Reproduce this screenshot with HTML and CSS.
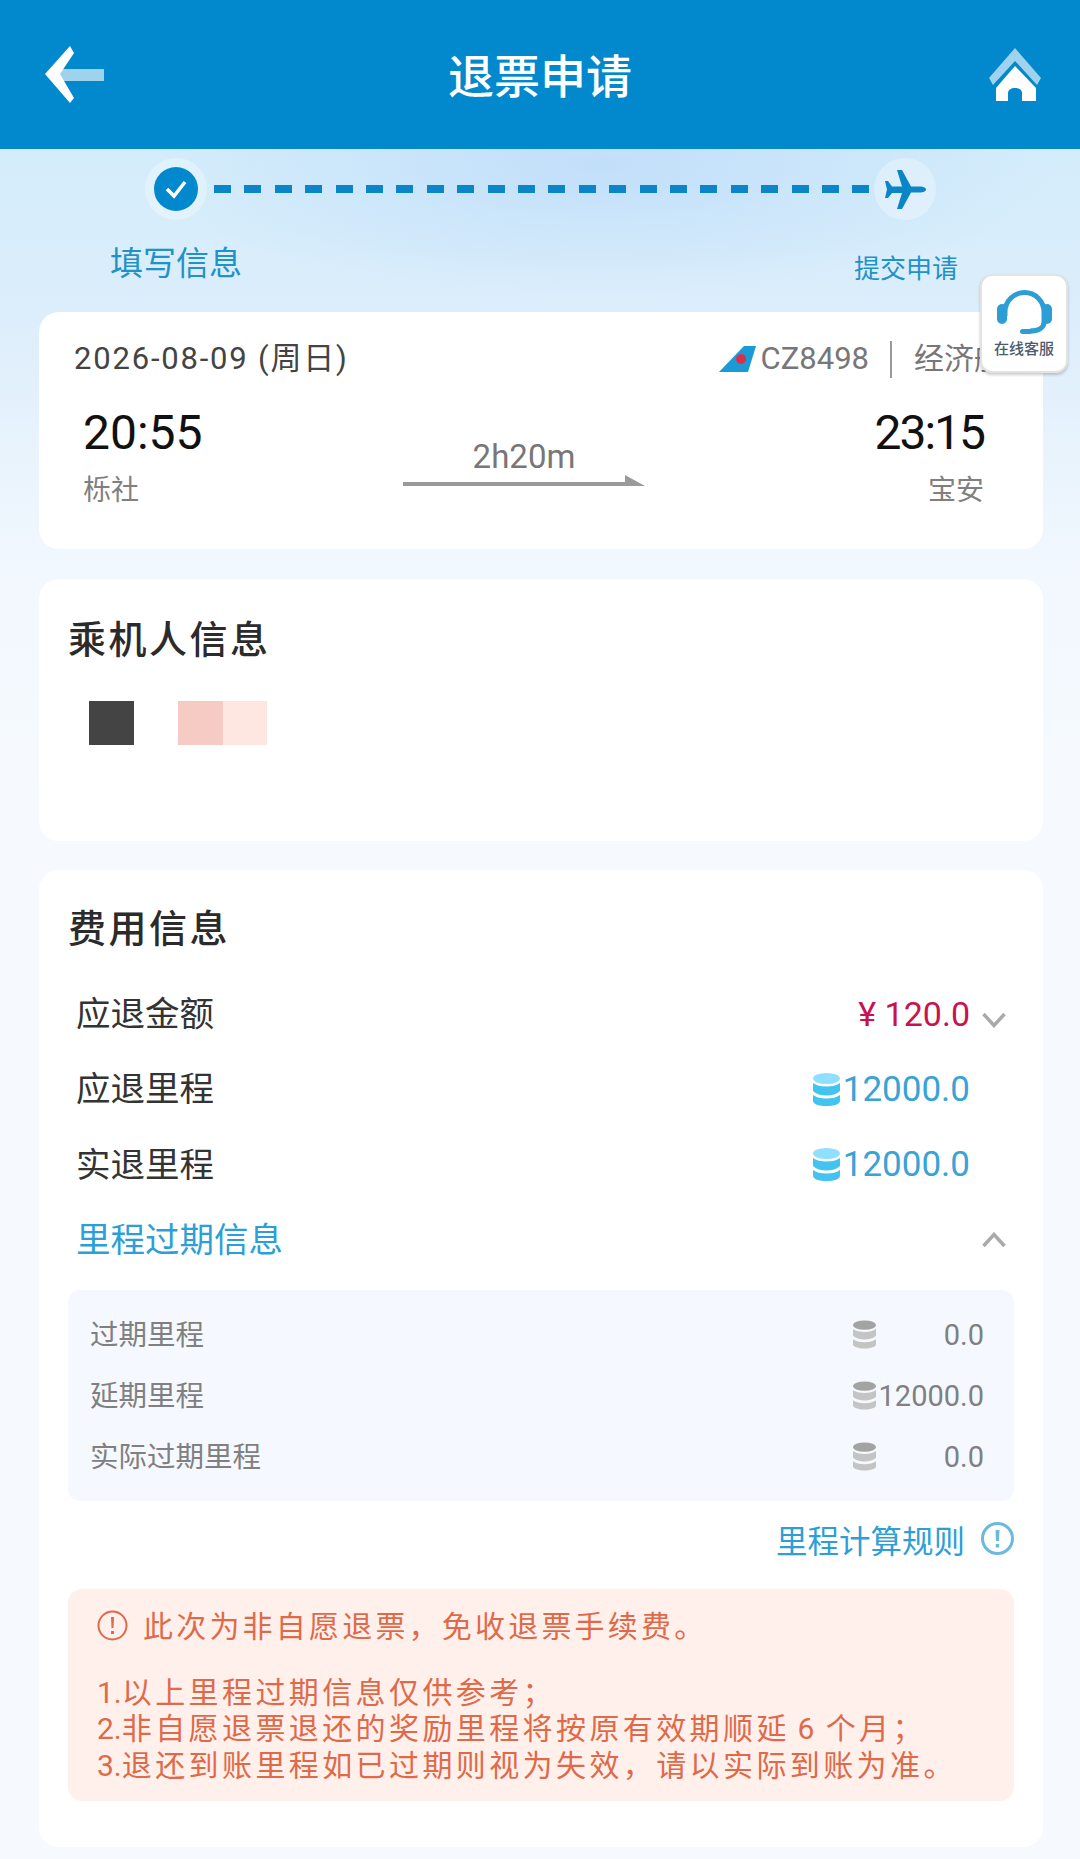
FILE: index.html
```html
<!DOCTYPE html>
<html lang="zh-CN">
	<head>
		<meta charset="utf-8">
		<title>退票申请</title>
		<link rel="stylesheet" href="styles.css">
	</head>
	<body>
		<svg class="defs" width="0" height="0">
			<symbol id="coin" viewBox="0 0 27 33">
				<path fill="var(--coin-low)" d="M0 22c3 2.500 8 3.500 13.500 3.500S24 24.500 27 22v6c0 3-6 5-13.500 5S0 31 0 28z"/>
				<path fill="var(--coin-low)" d="M0 10c3 2.500 8 3.500 13.500 3.500S24 12.500 27 10v8c-3 3-8 4.500-13.500 4.500S3 21 0 18z"/>
				<ellipse fill="var(--coin-top)" cx="13.500" cy="5.500" rx="13.500" ry="5.500"/>
			</symbol>
		</svg>

		<header class="topbar">
			<svg class="back-icon" width="60" height="60" viewBox="0 0 60 60">
				<rect x="16" y="23" width="44" height="12" fill="#9fd2ec"/>
				<path fill="#fff" d="M1 28 26 0l4 7-14 21 14 24-4 5z"/>
			</svg>
			<h1 class="topbar-title">退票申请</h1>
			<svg class="home-icon" width="54" height="54" viewBox="0 0 54 54">
				<path fill="#9fd2ec" d="M27 0 53 30l-4 7L27 13 5 37l-4-7z"/>
				<path fill="#fff" d="M27 18 48 40v13H8V40z"/>
				<path fill="#0288cc" d="M20 54V45c0-3 3-5 7-5s7 2 7 5v9z"/>
			</svg>
		</header>

		<section class="steps">
			<div class="track">
				<span class="halo">
					<svg width="44" height="44" viewBox="0 0 44 44">
						<circle cx="22" cy="22" r="22" fill="#0288cc"/>
						<path d="M13 22l7 7 11-14" fill="none" stroke="#fff" stroke-width="3.500"/>
					</svg>
				</span>
				<span class="track-line"></span>
				<span class="halo">
					<svg width="41" height="41" viewBox="0 0 41 41">
						<path fill="#0a85c8" d="M41 20.500c0-2-3-3-6-3h-9L17 1h-5l5 16.500H7L3 12H0l2 8.500L0 29h3l4-5h10l-5 16h5l9-16.500h9c3 0 6-1 6-3z"/>
					</svg>
				</span>
			</div>
			<div class="step-labels">
				<span class="step-now">填写信息</span>
				<span class="step-next">提交申请</span>
			</div>
		</section>

		<aside class="service">
			<svg width="55" height="47" viewBox="0 0 55 47">
				<path d="M8 27V23a19.500 19.500 0 0 1 39 0v10c0 6-6 9-14 9" fill="none" stroke="#2c9ed4" stroke-width="5"/>
				<rect x="0" y="15" width="10" height="20" rx="5" fill="#2c9ed4"/>
				<rect x="45" y="15" width="10" height="20" rx="5" fill="#2c9ed4"/>
				<rect x="23" y="40" width="12" height="5" rx="2.500" fill="#2c9ed4"/>
			</svg>
			<span>在线客服</span>
		</aside>

		<main class="content">
			<section class="card flight">
				<div class="flight-top">
					<span class="flight-date">2026-08-09 (周日)</span>
					<div class="flight-info">
						<svg class="tail" width="37" height="26" viewBox="0 0 37 26">
							<path fill="#1c9ad6" d="M0 26 25 0h12L29 26z"/>
							<circle cx="22" cy="13" r="5" fill="#d8304a"/>
						</svg>
						<span class="flight-no">CZ8498</span>
						<span class="flight-sep"></span>
						<span class="flight-cabin">经济舱</span>
					</div>
				</div>
				<div class="flight-main">
					<div>
						<div class="flight-time">20:55</div>
						<div class="flight-city">栎社</div>
					</div>
					<div class="flight-mid">
						<div class="flight-len">2h20m</div>
						<svg class="flight-arrow" width="242" height="12" viewBox="0 0 242 12">
							<path fill="#9a9a9a" d="M0 7h222V0l20 11H0z"/>
						</svg>
					</div>
					<div class="flight-end">
						<div class="flight-time flight-time-tight">23:15</div>
						<div class="flight-city">宝安</div>
					</div>
				</div>
			</section>

			<section class="card passengers">
				<h2 class="card-title">乘机人信息</h2>
				<div class="mosaic">
					<span class="mosaic-dark"></span>
					<span class="mosaic-pink"></span>
					<span class="mosaic-light"></span>
				</div>
			</section>

			<section class="card fees">
				<h2 class="card-title">费用信息</h2>
				<div class="fee-row">
					<span>应退金额</span>
					<span class="fee-money">¥ 120.0</span>
					<svg class="chev chev-low" width="24" height="16" viewBox="0 0 24 16"><path d="M1.500 2 12 13.500 22.500 2" fill="none" stroke="#aaa" stroke-width="3.500"/></svg>
				</div>
				<div class="fee-row">
					<span>应退里程</span>
					<span class="fee-miles"><svg width="27" height="33"><use href="#coin"/></svg>12000.0</span>
					<span class="chev"></span>
				</div>
				<div class="fee-row">
					<span>实退里程</span>
					<span class="fee-miles"><svg width="27" height="33"><use href="#coin"/></svg>12000.0</span>
					<span class="chev"></span>
				</div>
				<div class="fee-row fee-toggle">
					<span>里程过期信息</span>
					<svg class="chev" width="24" height="16" viewBox="0 0 24 16"><path d="M1.500 14 12 2.500 22.500 14" fill="none" stroke="#aaa" stroke-width="3.500"/></svg>
				</div>

				<div class="expiry">
					<div class="expiry-row">
						<span class="expiry-name">过期里程</span>
						<svg width="23" height="29"><use href="#coin"/></svg>
						<span class="expiry-val">0.0</span>
					</div>
					<div class="expiry-row">
						<span class="expiry-name">延期里程</span>
						<svg width="23" height="29"><use href="#coin"/></svg>
						<span class="expiry-val">12000.0</span>
					</div>
					<div class="expiry-row">
						<span class="expiry-name">实际过期里程</span>
						<svg width="23" height="29"><use href="#coin"/></svg>
						<span class="expiry-val">0.0</span>
					</div>
				</div>

				<div class="rule-link">
					<span>里程计算规则</span>
					<svg width="33" height="33" viewBox="0 0 33 33">
						<circle cx="16.500" cy="16.500" r="15" fill="none" stroke="#6cb9e0" stroke-width="3"/>
						<path d="M14.500 8h4l-.5 11h-3zM14.800 22h3.400v3.400h-3.400z" fill="#6cb9e0"/>
					</svg>
				</div>

				<div class="alert">
					<div class="alert-head">
						<svg width="31" height="31" viewBox="0 0 31 31">
							<circle cx="15.500" cy="15.500" r="14" fill="none" stroke="#de6a4a" stroke-width="2"/>
							<path d="M14 7h3l-.5 11h-2zM14 21h3v3h-3z" fill="#de6a4a"/>
						</svg>
						<span>此次为非自愿退票，免收退票手续费。</span>
					</div>
					<div class="alert-notes">
						<div><span class="note-num">1.</span>以上里程过期信息仅供参考；</div>
						<div><span class="note-num">2.</span>非自愿退票退还的奖励里程将按原有效期顺延 6 个月；</div>
						<div><span class="note-num">3.</span>退还到账里程如已过期则视为失效，请以实际到账为准。</div>
					</div>
				</div>
			</section>
		</main>
	</body>
</html>
```

FILE: styles.css
```css
*
{
	box-sizing: border-box;
}

body
{
	position: relative;
	margin: 0;
	width: 1080px;
	min-height: 1859px;
	padding-bottom: 13px;
	font-family: Roboto, "Noto Sans CJK SC", sans-serif;
	color: #222;
	background:
		radial-gradient(ellipse 460px 130px at 600px 165px, #c2dffa, rgba(194, 223, 250, 0)),
		linear-gradient(180deg, #d4edfb 150px, #dcedfb 310px, #f2f8fe 570px, #f6faff 800px);
}

.defs
{
	position: absolute;
}

/* top bar */
.topbar
{
	display: grid;
	grid-template-columns: 1fr auto 1fr;
	align-items: center;
	height: 149px;
	padding: 0 38px;
	background: #0288cc;
}

.topbar-title
{
	margin: 0;
	padding-bottom: 3px;
	font-size: 46px;
	font-weight: 500;
	color: #fff;
}

.back-icon
{
	margin: 3px 0 0 6px;
}

.home-icon
{
	justify-self: end;
}

/* progress */
.steps
{
	padding-top: 9px;
}

.track
{
	display: flex;
	align-items: center;
	padding: 0 144px 0 145px;
}

.halo
{
	display: flex;
	align-items: center;
	justify-content: center;
	width: 62px;
	height: 62px;
	border-radius: 50%;
	background: rgba(255, 255, 255, 0.3);
}

.track-line
{
	flex: 1;
	height: 8px;
	margin: 0 5px 0 7px;
	background: repeating-linear-gradient(90deg, #0a85c8 0, #0a85c8 17px, transparent 17px, transparent 30.4px);
}

.step-labels
{
	display: flex;
	align-items: flex-end;
	justify-content: space-between;
	margin: 25px 0 29px;
	padding: 0 122px 0 110px;
	color: #1f92c9;
}

.step-now
{
	font-size: 33px;
	line-height: 38px;
}

.step-next
{
	font-size: 26px;
	line-height: 28px;
}

/* floating service button */
.service
{
	position: absolute;
	top: 274px;
	right: 12px;
	display: flex;
	flex-direction: column;
	align-items: center;
	width: 88px;
	height: 99px;
	padding-top: 13px;
	border: 2px solid #e2e2e2;
	border-radius: 12px;
	background: #fff;
	box-shadow: 0 2px 3px rgba(0, 0, 0, 0.2);
	font-size: 15px;
	font-weight: 500;
	line-height: 18px;
	color: #4b5b6b;
}

.service span
{
	margin-top: 4px;
	white-space: nowrap;
}

/* cards */
.content
{
	display: flex;
	flex-direction: column;
	gap: 29px;
	padding: 0 37px 0 39px;
}

.card
{
	border-radius: 20px;
	background: #fff;
}

.card-title
{
	margin: 0;
	font-size: 38px;
	line-height: 50px;
	font-weight: 500;
	letter-spacing: 2.500px;
	color: #2b2b2b;
}

/* flight card */
.flight
{
	height: 237px;
	margin-bottom: 1px;
}

.flight-top
{
	display: flex;
	align-items: center;
	justify-content: space-between;
	padding: 27px 39px 0 35px;
	font-size: 30px;
	line-height: 40px;
}

.flight-date
{
	font-size: 31px;
	letter-spacing: 1.800px;
	color: #444;
}

.flight-info
{
	display: flex;
	align-items: center;
	color: #777;
}

.flight-no
{
	margin-left: 5px;
	font-size: 31px;
}

.flight-sep
{
	width: 2px;
	height: 37px;
	margin: 0 22px 0 21px;
	background: #999;
}

.flight-main
{
	display: grid;
	grid-template-columns: 320px 242px 1fr;
	padding: 26px 59px 0 44px;
}

.flight-time
{
	font-size: 48px;
	line-height: 56px;
	color: #111;
}

.flight-time-tight
{
	letter-spacing: -2px;
}

.flight-city
{
	margin-top: 12px;
	font-size: 28px;
	line-height: 36px;
	color: #808080;
}

.flight-end
{
	text-align: right;
}

.flight-mid
{
	padding-top: 32px;
	text-align: center;
}

.flight-len
{
	font-size: 33px;
	line-height: 40px;
	color: #777;
}

.flight-arrow
{
	display: block;
	margin-top: -2px;
}

/* passengers */
.passengers
{
	height: 262px;
	padding: 36px 30px 0 29px;
}

.mosaic
{
	display: flex;
	margin-top: 36px;
	padding-left: 21px;
}

.mosaic span
{
	width: 45px;
	height: 44px;
}

.mosaic .mosaic-dark
{
	margin-right: 44px;
	background: #444;
}

.mosaic .mosaic-pink
{
	background: #f6cbc3;
}

.mosaic .mosaic-light
{
	width: 44px;
	background: #fee7e1;
}

/* fees */
.fees
{
	--coin-top: #8fe0ff;
	--coin-low: #43c3ef;
	padding: 34px 29px 46px;
}

.fees .card-title
{
	margin-bottom: 22px;
}

.fee-row
{
	display: flex;
	align-items: center;
	height: 75.500px;
	padding: 0 8px;
	font-size: 34.500px;
	color: #333;
}

.fee-row > span:first-child
{
	flex: 1;
	padding-bottom: 6px;
}

.chev
{
	flex: none;
	width: 24px;
	margin-left: 12px;
}

.chev-low
{
	margin-top: 12px;
}

.fee-money
{
	font-size: 34px;
	color: #c9134f;
}

.fee-miles
{
	display: flex;
	align-items: center;
	gap: 3px;
	font-size: 35px;
	color: #3aa3d6;
}

.fee-toggle
{
	color: #2d9fd6;
}

.expiry
{
	--coin-top: #a3a3a3;
	--coin-low: #c4c4c4;
	margin-top: 12px;
	padding: 14px 30px 14px 22px;
	border-radius: 12px;
	background: #f5f9ff;
	color: #808080;
}

.expiry-row
{
	display: flex;
	align-items: center;
	height: 61px;
	font-size: 28.500px;
}

.expiry-name
{
	flex: 1;
	padding-bottom: 4px;
}

.expiry-val
{
	width: 108px;
	font-size: 29px;
	text-align: right;
}

.rule-link
{
	display: flex;
	align-items: center;
	justify-content: flex-end;
	gap: 16px;
	height: 75px;
	font-size: 31.500px;
	color: #2d9fd6;
}

.alert
{
	height: 212px;
	margin-top: 13px;
	padding: 17px 20px 0 29px;
	border-radius: 14px;
	background: #fff0ec;
	font-size: 30px;
	line-height: 36.500px;
	color: #de6a4a;
}

.alert-head
{
	display: flex;
	align-items: center;
	gap: 15px;
	letter-spacing: 3.200px;
}

.alert-head span
{
	padding-top: 3px;
}

.alert-notes
{
	margin-top: 29px;
	letter-spacing: 3.400px;
	word-spacing: -3px;
	white-space: nowrap;
}

.note-num
{
	letter-spacing: 0;
}
```
